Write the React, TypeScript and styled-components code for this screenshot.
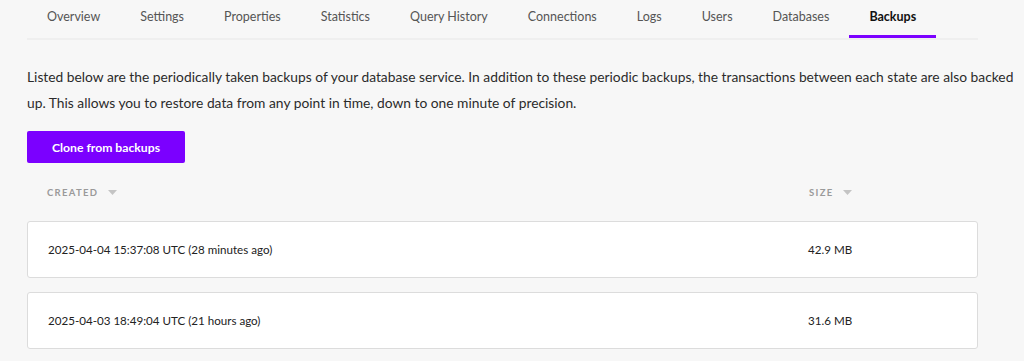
import React from "react";
import styled, { createGlobalStyle } from "styled-components";

const GlobalStyle = createGlobalStyle`
  html, body {
    margin: 0;
    padding: 0;
    background: #f7f7f7;
    font-family: "Lato", "Liberation Sans", sans-serif;
    color: #2b2b2b;
  }
`;

const tabs = [
  "Overview",
  "Settings",
  "Properties",
  "Statistics",
  "Query History",
  "Connections",
  "Logs",
  "Users",
  "Databases",
  "Backups",
];

const backups = [
  { created: "2025-04-04 15:37:08 UTC (28 minutes ago)", size: "42.9 MB" },
  { created: "2025-04-03 18:49:04 UTC (21 hours ago)", size: "31.6 MB" },
];

function Caret() {
  return (
    <CaretSvg width="9" height="5" viewBox="0 0 9 5">
      <path d="M0 0 L9 0 L4.5 5 Z" fill="#c4c4c4" />
    </CaretSvg>
  );
}

export default function App() {
  return (
    <>
      <GlobalStyle />
      <Page>
        <TabBar>
          {tabs.map((t) => (
            <Tab key={t} $active={t === "Backups"}>
              {t}
            </Tab>
          ))}
        </TabBar>
        <Intro>
          Listed below are the periodically taken backups of your database
          service. In addition to these periodic backups, the transactions
          between each state are also backed
          <br />
          up. This allows you to restore data from any point in time, down to
          one minute of precision.
        </Intro>
        <CloneButton>Clone from backups</CloneButton>
        <HeaderRow>
          <HeadCell>
            CREATED <Caret />
          </HeadCell>
          <HeadCell>
            SIZE <Caret />
          </HeadCell>
        </HeaderRow>
        <List>
          {backups.map((b) => (
            <Row key={b.created}>
              <span>{b.created}</span>
              <span>{b.size}</span>
            </Row>
          ))}
        </List>
      </Page>
    </>
  );
}

const Page = styled.div`
  padding: 0 46px 0 27px;
  width: 951px;
`;

const TabBar = styled.div`
  display: flex;
  height: 38px;
  border-bottom: 2px solid #efefef;
`;

const Tab = styled.div<{ $active?: boolean }>`
  padding: 0 20px;
  height: 38px;
  line-height: 34px;
  font-size: 12.5px;
  color: ${(p) => (p.$active ? "#111" : "#555")};
  font-weight: ${(p) => (p.$active ? 700 : 400)};
  box-sizing: border-box;
  border-bottom: 3px solid ${(p) => (p.$active ? "#7b00ff" : "transparent")};
`;

const Intro = styled.p`
  margin: 24px 0 0;
  width: 1000px;
  font-size: 13.8px;
  line-height: 26px;
  color: #2b2b2b;
`;

const CloneButton = styled.button`
  display: block;
  margin-top: 15px;
  width: 158px;
  height: 32px;
  border: none;
  border-radius: 2px;
  background: #7b00ff;
  color: #fff;
  font-family: inherit;
  font-size: 12.2px;
  font-weight: 700;
  cursor: pointer;
`;

const HeaderRow = styled.div`
  display: grid;
  grid-template-columns: 1fr 149px;
  padding: 0 20px;
  height: 58px;
  align-items: center;
`;

const HeadCell = styled.div`
  display: flex;
  align-items: center;
  gap: 10px;
  font-size: 9.5px;
  font-weight: 700;
  letter-spacing: 1.3px;
  color: #9a9a9a;
`;

const CaretSvg = styled.svg`
  display: block;
`;

const List = styled.div`
  display: flex;
  flex-direction: column;
  gap: 14px;
`;

const Row = styled.div`
  display: grid;
  grid-template-columns: 1fr 149px;
  align-items: center;
  height: 57px;
  padding: 0 20px;
  box-sizing: border-box;
  background: #fff;
  border: 1px solid #dcdcdc;
  border-radius: 3px;
  font-size: 11.6px;
  color: #222;
`;
